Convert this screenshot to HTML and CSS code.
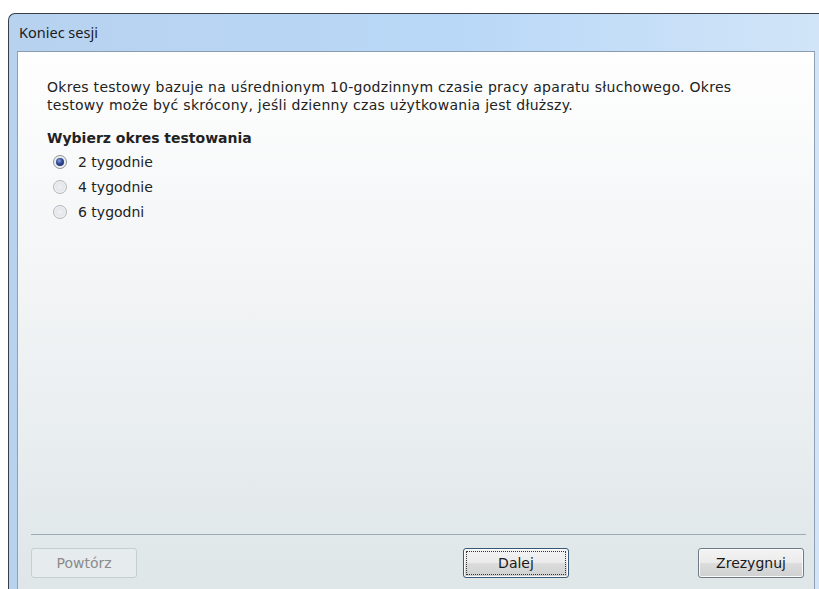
FILE: index.html
```html
<!DOCTYPE html>
<html lang="pl">
<head>
<meta charset="utf-8">
<title>Koniec sesji</title>
<link rel="stylesheet" href="styles.css">
</head>
<body>
<div class="window">
  <div class="titlebar">Koniec sesji</div>
  <div class="frame">
    <div class="client">
      <div class="main">
        <p class="intro">Okres testowy bazuje na uśrednionym 10-godzinnym czasie pracy aparatu słuchowego. Okres<br>testowy może być skrócony, jeśli dzienny czas użytkowania jest dłuższy.</p>
        <div class="group-title">Wybierz okres testowania</div>
        <ul class="radios">
          <li class="option"><span class="radio checked"></span>2 tygodnie</li>
          <li class="option"><span class="radio"></span>4 tygodnie</li>
          <li class="option"><span class="radio"></span>6 tygodni</li>
        </ul>
      </div>
      <div class="separator"></div>
      <div class="buttons">
        <button class="btn disabled" type="button">Powtórz</button>
        <div class="right-group">
          <button class="btn default" type="button"><span class="focus">Dalej</span></button>
          <button class="btn" type="button">Zrezygnuj</button>
        </div>
      </div>
    </div>
  </div>
</div>
</body>
</html>
```
FILE: styles.css
```css
html, body {
  margin: 0;
  padding: 0;
  background: #ffffff;
  overflow: hidden;
  height: 589px;
}

.window {
  margin: 13px 0 0 8px;
  width: 820px;
  border-top: 1px solid #3b3f45;
  border-left: 1px solid #3b3f45;
  border-top-left-radius: 7px;
  background: linear-gradient(90deg, #b7d2ef 0%, #b9d8f7 55%, #d2e5f8 100%);
  overflow: hidden;
}

.titlebar {
  height: 37px;
  box-sizing: border-box;
  padding: 9px 0 0 10px;
  font-family: "Noto Sans", "Open Sans", sans-serif;
  font-size: 14.5px;
  color: #1b1b1b;
  line-height: 18px;
}

.frame {
  padding: 0 0 0 8px;
}

.client {
  width: 796px;
  height: 560px;
  border-top: 1px solid #8c9cb0;
  border-left: 1px solid #8fa0b4;
  border-right: 1px solid #8fa0b4;
  background: linear-gradient(180deg, #fefefe 0%, #f3f5f6 40%, #dde5e7 100%);
  display: flex;
  flex-direction: column;
  font-family: "DejaVu Sans", Verdana, sans-serif;
  font-size: 14px;
  color: #222222;
}

.main {
  height: 482px;
  box-sizing: border-box;
  padding: 26px 0 0 29px;
}

.intro {
  margin: 0;
  line-height: 18px;
  letter-spacing: 0.28px;
}

.group-title {
  margin-top: 15px;
  font-weight: bold;
  line-height: 18px;
}

.radios {
  list-style: none;
  margin: 2px 0 0 0;
  padding: 0;
}

.option {
  display: flex;
  align-items: center;
  height: 25px;
  padding-left: 6px;
}

.radio {
  width: 12px;
  height: 12px;
  border-radius: 50%;
  border: 1px solid #b3b7bb;
  background: radial-gradient(circle at 50% 50%, #eef0f2 0%, #e2e5e8 60%, #cfd3d7 100%);
  margin-right: 11px;
  position: relative;
  box-shadow: inset 0 0 0 1px #f4f5f6;
}

.radio.checked {
  border-color: #8f9399;
}

.radio.checked::after {
  content: "";
  position: absolute;
  left: 2px;
  top: 2px;
  width: 8px;
  height: 8px;
  border-radius: 50%;
  background: radial-gradient(circle at 40% 35%, #8a9fd6 0%, #2d4592 45%, #17276a 100%);
}

.separator {
  height: 1px;
  margin: 0 8px 0 13px;
  background: #9eaab6;
}

.buttons {
  display: flex;
  justify-content: space-between;
  padding: 13px 10px 0 13px;
}

.right-group {
  display: flex;
  gap: 129px;
}

.btn {
  width: 106px;
  height: 30px;
  box-sizing: border-box;
  border: 1px solid #707a84;
  border-radius: 3px;
  background: linear-gradient(180deg, #f4f4f4 0%, #ebebeb 48%, #dcdcdc 52%, #cfd0d1 100%);
  box-shadow: inset 0 0 0 1px #fbfbfb;
  font-family: "DejaVu Sans", Verdana, sans-serif;
  font-size: 14px;
  color: #1a1a1a;
  padding: 0;
}

.btn.disabled {
  border-color: #c6ced3;
  background: #e6ebed;
  box-shadow: none;
  color: #8b8b8b;
}

.btn.default {
  border-color: #3a5978;
  padding: 2px;
}

.focus {
  display: flex;
  align-items: center;
  justify-content: center;
  height: 100%;
  box-sizing: border-box;
  border: 1px dotted #333;
  border-radius: 1px;
}
```
